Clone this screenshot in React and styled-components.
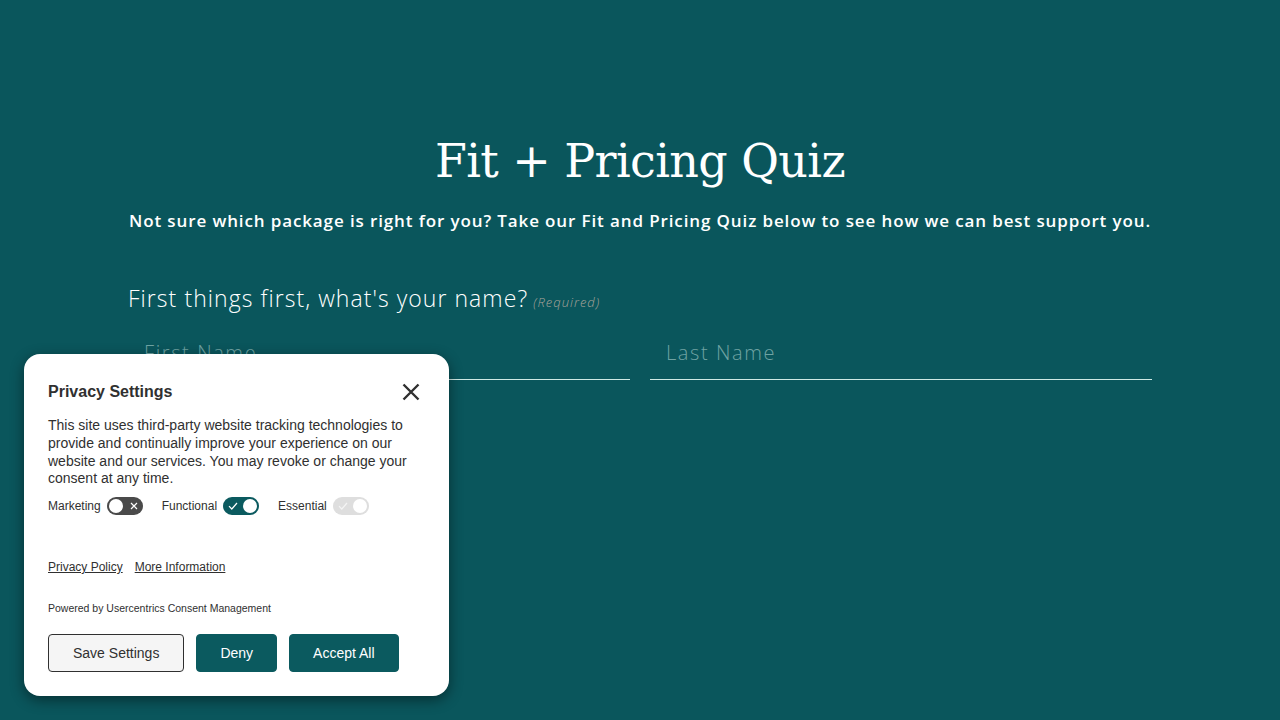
import React from "react";
import styled, { createGlobalStyle } from "styled-components";

const Global = createGlobalStyle`
  html, body {
    margin: 0;
    padding: 0;
    background: #0a565c;
  }
  body {
    font-family: "Open Sans", sans-serif;
  }
`;

const Page = styled.div`
  min-height: 720px;
  background: #0a565c;
  display: flex;
  justify-content: center;
  position: relative;
  overflow: hidden;
`;

const Content = styled.main`
  width: 1024px;
  padding-top: 130px;
  display: flex;
  flex-direction: column;
`;

const Title = styled.h1`
  margin: 0;
  font-family: "DejaVu Serif", "Liberation Serif", serif;
  font-weight: 400;
  font-size: 46px;
  line-height: 62px;
  color: #fff;
  text-align: center;
  letter-spacing: -0.6px;
`;

const Lead = styled.p`
  margin: 17px 0 0;
  font-family: "Open Sans", sans-serif;
  font-weight: 600;
  font-size: 17px;
  color: #fff;
  text-align: center;
  letter-spacing: 0.88px;
  white-space: nowrap;
`;

const Label = styled.div`
  margin-top: 50px;
  font-family: "Open Sans", sans-serif;
  font-weight: 300;
  font-size: 23px;
  color: #fff;
  display: flex;
  align-items: baseline;
  gap: 5px;
  letter-spacing: 1.05px;
`;

const Required = styled.span`
  font-style: italic;
  font-size: 13px;
  letter-spacing: 1px;
  color: #a8a39a;
`;

const Fields = styled.div`
  display: grid;
  grid-template-columns: 1fr 1fr;
  gap: 20px;
  margin-top: 11px;
`;

const Field = styled.input`
  background: transparent;
  border: none;
  border-bottom: 1px solid #cfe9e4;
  height: 54px;
  padding: 0 16px;
  font-family: "Open Sans", sans-serif;
  font-weight: 300;
  font-size: 20px;
  letter-spacing: 1.6px;
  color: #fff;
  outline: none;
  &::placeholder {
    color: #6fa3a3;
  }
`;

const Modal = styled.div`
  position: absolute;
  left: 24px;
  top: 354px;
  width: 425px;
  height: 342px;
  box-sizing: border-box;
  background: #fff;
  border-radius: 16px;
  box-shadow: 0 4px 14px rgba(0, 0, 0, 0.45);
  padding: 23px 24px 24px;
  font-family: "Liberation Sans", Arial, sans-serif;
  color: #303030;
  display: flex;
  flex-direction: column;
`;

const Header = styled.div`
  display: flex;
  justify-content: space-between;
  align-items: center;
  height: 30px;
`;

const ModalTitle = styled.h2`
  margin: 0;
  font-size: 16px;
  font-weight: 700;
  color: #303030;
`;

const Close = styled.button`
  background: none;
  border: none;
  padding: 0;
  margin-right: 4px;
  width: 20px;
  height: 20px;
  display: flex;
  align-items: center;
  justify-content: center;
  cursor: pointer;
`;

const Text = styled.p`
  margin: 11px 0 0;
  font-size: 14px;
  line-height: 17.7px;
  color: #303030;
`;

const Toggles = styled.div`
  display: flex;
  align-items: center;
  gap: 19px;
  margin-top: 9px;
`;

const ToggleItem = styled.label`
  display: flex;
  align-items: center;
  gap: 6px;
  font-size: 12px;
  color: #303030;
`;

const Track = styled.span`
  position: relative;
  width: 36px;
  height: 18px;
  border-radius: 9px;
  background: ${(p) => p.bg};
  display: inline-block;
`;

const Knob = styled.span`
  position: absolute;
  top: 2px;
  left: ${(p) => (p.right ? "20px" : "2px")};
  width: 14px;
  height: 14px;
  border-radius: 50%;
  background: #fff;
`;

const Mark = styled.span`
  position: absolute;
  top: 4px;
  left: ${(p) => (p.right ? "22px" : "5px")};
  width: 10px;
  height: 10px;
  display: flex;
`;

const Links = styled.div`
  display: flex;
  gap: 12px;
  margin-top: 45px;
`;

const Link = styled.a`
  font-size: 12px;
  color: #303030;
  text-decoration: underline;
`;

const Powered = styled.div`
  margin-top: 28px;
  font-size: 10.5px;
  color: #303030;
`;

const Buttons = styled.div`
  display: flex;
  gap: 12px;
  margin-top: 20px;
`;

const Button = styled.button`
  height: 38px;
  padding: 0 ${(p) => p.pad || 24}px;
  border-radius: 4px;
  font-family: "Liberation Sans", Arial, sans-serif;
  font-size: 14px;
  cursor: pointer;
  border: 1px solid ${(p) => (p.primary ? "#0b5a5f" : "#303030")};
  background: ${(p) => (p.primary ? "#0b5a5f" : "#f5f5f5")};
  color: ${(p) => (p.primary ? "#fff" : "#303030")};
`;

const Check = ({ color }) => (
  <svg width="10" height="10" viewBox="0 0 10 10">
    <path d="M1 5.2 L3.8 8 L9 2" fill="none" stroke={color} strokeWidth="1.2" />
  </svg>
);

const Cross = () => (
  <svg width="10" height="10" viewBox="0 0 10 10">
    <path d="M2 2 L8 8 M8 2 L2 8" fill="none" stroke="#fff" strokeWidth="1.2" />
  </svg>
);

const Toggle = ({ label, on, bg }) => (
  <ToggleItem>
    {label}
    <Track bg={bg}>
      {on ? (
        <>
          <Mark>
            <Check color={bg === "#0b5a5f" ? "#fff" : "#f4f4f4"} />
          </Mark>
          <Knob right />
        </>
      ) : (
        <>
          <Knob />
          <Mark right>
            <Cross />
          </Mark>
        </>
      )}
    </Track>
  </ToggleItem>
);

export default function App() {
  return (
    <Page>
      <Global />
      <Content>
        <Title>Fit + Pricing Quiz</Title>
        <Lead>
          Not sure which package is right for you? Take our Fit and Pricing Quiz below to see how we can best support you.
        </Lead>
        <Label>
          First things first, what's your name?
          <Required>(Required)</Required>
        </Label>
        <Fields>
          <Field placeholder="First Name" />
          <Field placeholder="Last Name" />
        </Fields>
      </Content>
      <Modal>
        <Header>
          <ModalTitle>Privacy Settings</ModalTitle>
          <Close aria-label="Close">
            <svg width="18" height="18" viewBox="0 0 18 18">
              <path d="M1.5 1.5 L16.5 16.5 M16.5 1.5 L1.5 16.5" stroke="#303030" strokeWidth="2.4" />
            </svg>
          </Close>
        </Header>
        <Text>
          This site uses third-party website tracking technologies to provide and continually improve your experience on our website and our services. You may revoke or change your consent at any time.
        </Text>
        <Toggles>
          <Toggle label="Marketing" bg="#4a4a4a" />
          <Toggle label="Functional" on bg="#0b5a5f" />
          <Toggle label="Essential" on bg="#dedede" />
        </Toggles>
        <Links>
          <Link href="#">Privacy Policy</Link>
          <Link href="#">More Information</Link>
        </Links>
        <Powered>Powered by Usercentrics Consent Management</Powered>
        <Buttons>
          <Button pad={24}>Save Settings</Button>
          <Button primary pad={23}>Deny</Button>
          <Button primary pad={23}>Accept All</Button>
        </Buttons>
      </Modal>
    </Page>
  );
}
